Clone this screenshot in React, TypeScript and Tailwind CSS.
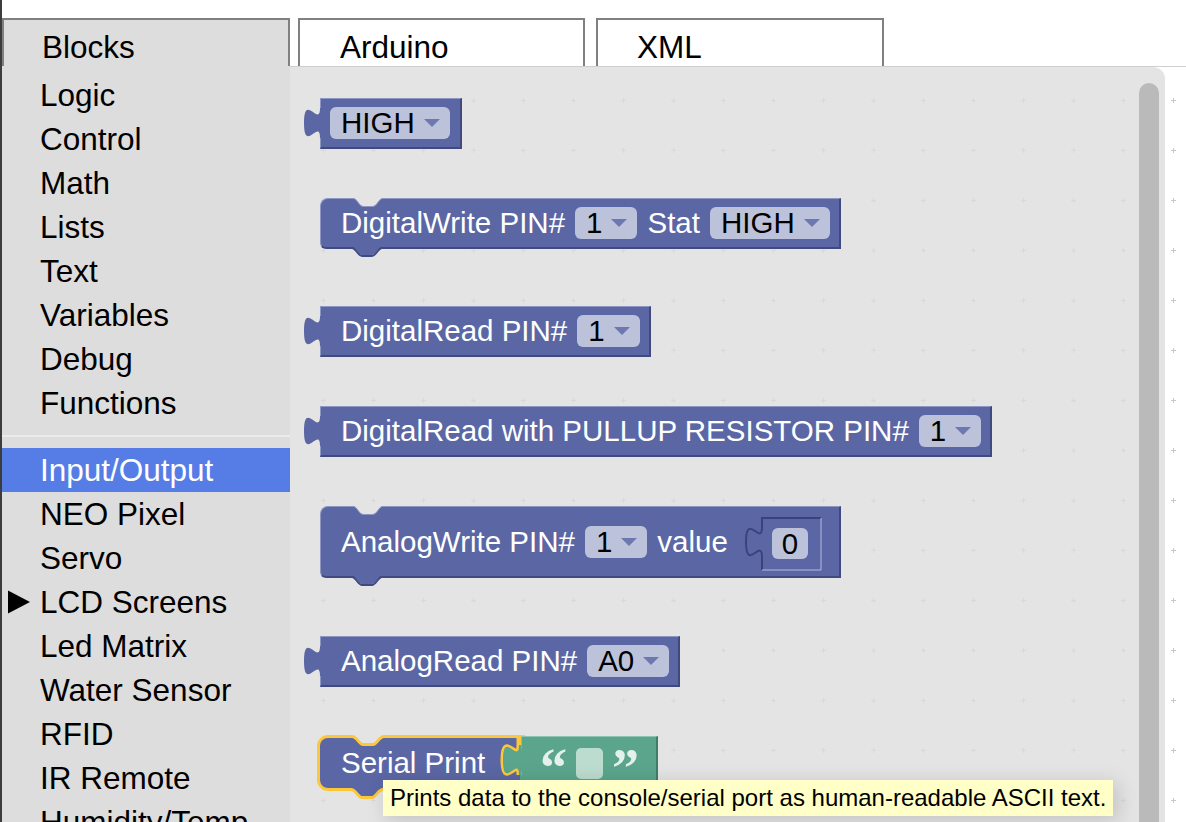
import React from "react";

const PURPLE = "#5b67a5";
const GREEN = "#5ba58c";
const FLY = "#e4e4e4";
const YELLOW = "#fcc83a";

function Arrow() {
  return (
    <svg width="16" height="8" viewBox="0 0 16 8" className="shrink-0">
      <path d="M0,0 H16 L8,8 Z" fill="#6d78b1" />
    </svg>
  );
}

function Dropdown({ label }: { label: string }) {
  return (
    <div className="flex h-[32px] shrink-0 items-center gap-[9px] rounded-[6px] bg-[#bdc2db] pl-[11px] pr-[10px] text-black">
      <span>{label}</span>
      <Arrow />
    </div>
  );
}

function OutputTab({ color = PURPLE }: { color?: string }) {
  return (
    <svg
      className="absolute left-[-17px] top-[9px] overflow-visible"
      width="18"
      height="32"
      viewBox="0 0 18 32"
    >
      <path d="M18,0 H16 C16,20 0,-16 0,15 C0,46 16,10 16,30 H18 Z" fill={color} />
    </svg>
  );
}

function Notch() {
  return (
    <svg className="absolute left-[32px] top-[-1px] overflow-visible" width="30" height="10" viewBox="0 0 30 10">
      <path d="M0,0 C4,0 6,8 10,8 H20 C24,8 26,0 30,0 Z" fill={FLY} />
      <path d="M0,0.5 C4,0.5 6,8.5 10,8.5 H20 C24,8.5 26,0.5 30,0.5" fill="none" stroke="#8e96c4" strokeWidth="1" />
    </svg>
  );
}

function Bump() {
  return (
    <svg className="absolute left-[31px] top-full overflow-visible" width="30" height="11" viewBox="0 0 30 11">
      <path d="M0,0 C4,0 6,8 10,8 H20 C24,8 26,0 30,0 Z" fill={PURPLE} />
      <path d="M0,1 C4,1 6,9 10,9 H20 C24,9 26,1 30,1" fill="none" stroke="#404a7e" strokeWidth="2" />
    </svg>
  );
}

function SelNotch() {
  return (
    <svg className="absolute left-[33px] top-[-3px] overflow-visible" width="30" height="12" viewBox="0 0 30 12">
      <path d="M-1,0 H31 V1.5 C26,1.5 24,9.5 20,9.5 H10 C6,9.5 4,1.5 -1,1.5 Z" fill={FLY} />
      <path d="M-1,1.5 C4,1.5 6,9.5 10,9.5 H20 C24,9.5 26,1.5 31,1.5" fill="none" stroke={YELLOW} strokeWidth="3" />
    </svg>
  );
}

function SelBump() {
  return (
    <svg className="absolute left-[32px] top-full overflow-visible" width="30" height="12" viewBox="0 0 30 12">
      <path d="M-1,0 H31 V1.5 C26,1.5 24,9.5 20,9.5 H10 C6,9.5 4,1.5 -1,1.5 Z" fill={PURPLE} />
      <path d="M-1,1.5 C4,1.5 6,9.5 10,9.5 H20 C24,9.5 26,1.5 31,1.5" fill="none" stroke={YELLOW} strokeWidth="3" />
    </svg>
  );
}

const blockBase =
  "relative flex shrink-0 items-center gap-[10px] bg-[#5b67a5] border-t border-l border-b-2 border-r-2 border-t-[#8e96c4] border-l-[#8e96c4] border-b-[#404a7e] border-r-[#404a7e] text-[29.5px] leading-none text-white";

function Grid() {
  return (
    <svg className="absolute inset-0 h-full w-full" width="100%" height="100%">
      <defs>
        <pattern id="bgrid" x="0" y="0" width="50" height="50" patternUnits="userSpaceOnUse">
          <rect x="31" y="33" width="5" height="1" fill="#c8c8c8" />
          <rect x="33" y="31" width="1" height="5" fill="#c8c8c8" />
        </pattern>
      </defs>
      <rect width="100%" height="100%" fill="url(#bgrid)" />
    </svg>
  );
}

function Toolbox() {
  const top = ["Logic", "Control", "Math", "Lists", "Text", "Variables", "Debug", "Functions"];
  const bottom = ["NEO Pixel", "Servo"];
  const bottom2 = ["Led Matrix", "Water Sensor", "RFID", "IR Remote", "Humidity/Temp"];
  return (
    <div className="w-[288px] shrink-0 overflow-hidden bg-[#dddddd] pt-[7px] text-[31.5px] leading-[44px] text-black">
      {top.map((t) => (
        <div key={t} className="h-[44px] whitespace-nowrap pl-[38px]">
          {t}
        </div>
      ))}
      <div className="h-[23px] pt-[10px]">
        <div className="h-[2px] w-full bg-[#ebebeb]" />
      </div>
      <div className="h-[44px] whitespace-nowrap bg-[#567de6] pl-[38px] text-white">Input/Output</div>
      {bottom.map((t) => (
        <div key={t} className="h-[44px] whitespace-nowrap pl-[38px]">
          {t}
        </div>
      ))}
      <div className="flex h-[44px] items-center whitespace-nowrap pl-[5px]">
        <svg width="24" height="24" viewBox="0 0 24 24" className="shrink-0">
          <path d="M1,0.5 L23,12 L1,23.5 Z" fill="#000" />
        </svg>
        <span className="ml-[9px]">LCD Screens</span>
      </div>
      {bottom2.map((t) => (
        <div key={t} className="h-[44px] whitespace-nowrap pl-[38px]">
          {t}
        </div>
      ))}
    </div>
  );
}

function Flyout() {
  return (
    <div className="relative flex h-full w-[875px] flex-col items-start rounded-tr-[12px] bg-[rgba(221,221,221,0.8)] pl-[30px]">
      {/* HIGH */}
      <div className={`${blockBase} mt-[31px] h-[51px] pl-[9px] pr-[10px]`}>
        <OutputTab />
        <Dropdown label="HIGH" />
      </div>

      {/* DigitalWrite */}
      <div className={`${blockBase} mt-[49px] h-[51px] rounded-tl-[8px] rounded-bl-[6px] pl-[20px] pr-[9px]`}>
        <Notch />
        <span className="whitespace-nowrap">DigitalWrite PIN#</span>
        <Dropdown label="1" />
        <span>Stat</span>
        <Dropdown label="HIGH" />
        <Bump />
      </div>

      {/* DigitalRead */}
      <div className={`${blockBase} mt-[57px] h-[51px] pl-[20px] pr-[9px]`}>
        <OutputTab />
        <span className="whitespace-nowrap">DigitalRead PIN#</span>
        <Dropdown label="1" />
      </div>

      {/* PULLUP */}
      <div className={`${blockBase} mt-[49px] h-[51px] pl-[20px] pr-[9px]`}>
        <OutputTab />
        <span className="whitespace-nowrap">DigitalRead with PULLUP RESISTOR PIN#</span>
        <Dropdown label="1" />
      </div>

      {/* AnalogWrite */}
      <div className={`${blockBase} mt-[49px] h-[72px] rounded-tl-[8px] rounded-bl-[6px] pl-[20px] pr-[16px]`}>
        <Notch />
        <span className="whitespace-nowrap">AnalogWrite PIN#</span>
        <Dropdown label="1" />
        <span>value</span>
        <div className="relative ml-[7px] mt-[4px] flex h-[54px] w-[78px] shrink-0 items-center pl-[27px]">
          <svg className="absolute inset-0 overflow-visible" width="78" height="54" viewBox="0 0 78 54">
            <path
              d="M76,1 H17 V10 C17,30 1,-6 1,25 C1,56 17,20 17,40 V53"
              fill="none"
              stroke="#39427a"
              strokeWidth="2"
            />
            <path d="M17,53 H76 V1" fill="none" stroke="#b4badd" strokeWidth="1" />
          </svg>
          <div className="relative flex h-[31px] w-[36px] items-center justify-center rounded-[6px] bg-[#bdc2db] text-black">
            0
          </div>
        </div>
        <Bump />
      </div>

      {/* AnalogRead */}
      <div className={`${blockBase} mt-[58px] h-[51px] pl-[20px] pr-[9px]`}>
        <OutputTab />
        <span className="whitespace-nowrap">AnalogRead PIN#</span>
        <Dropdown label="A0" />
      </div>

      {/* Serial Print */}
      <div className="relative mt-[51px] flex shrink-0 items-start text-[29.5px] leading-none text-white">
        <div className="relative flex h-[50px] w-[202px] items-center rounded-l-[8px] bg-[#5b67a5] pl-[21px] ring-[3px] ring-[#fcc83a]">
          <SelNotch />
          <span className="whitespace-nowrap">Serial Print</span>
          <SelBump />
        </div>
        <div className="relative z-10 ml-[-2px] mt-[-2px] flex h-[49px] w-[138px] items-start gap-[9px] border-t border-b-2 border-r-2 border-t-[#8dc4b1] border-b-[#3f7d67] border-r-[#3f7d67] bg-[#5ba58c] pl-[20px] pt-[11px]">
          <svg
            className="absolute left-[-17px] top-[8px] overflow-visible"
            width="18"
            height="32"
            viewBox="0 0 18 32"
          >
            <path d="M16,-9 V0 C16,20 0,-16 0,15 C0,46 16,10 16,30" fill="none" stroke={YELLOW} strokeWidth="5" />
            <path d="M18,0 H16 C16,20 0,-16 0,15 C0,46 16,10 16,30 H18 Z" fill={GREEN} />
          </svg>
          <span className="mt-[-2px] block h-[26px] w-[27px] overflow-visible text-center font-['Liberation_Serif',serif] text-[54px] font-bold leading-[44px] text-[#e3f0eb]">
            “
          </span>
          <div className="h-[31px] w-[27px] rounded-[5px] bg-[#bcdcd0]" />
          <span className="mt-[-2px] block h-[26px] w-[27px] overflow-visible text-center font-['Liberation_Serif',serif] text-[54px] font-bold leading-[44px] text-[#e3f0eb]">
            ”
          </span>
        </div>
      </div>

      <div className="absolute bottom-0 right-[6px] top-[16px] w-[20px] rounded-t-[10px] bg-[#bababa]" />
    </div>
  );
}

export default function App() {
  return (
    <div className="relative flex h-[822px] w-[1186px] overflow-hidden bg-white font-['Liberation_Sans',Arial,sans-serif]">
      <div className="w-[2px] shrink-0 bg-[#3c3c3c]" />
      <div className="flex min-w-0 flex-1 flex-col">
        <div className="flex h-[66px] shrink-0 items-end text-[31.5px] leading-[44px] text-black">
          <div className="h-[48px] w-[288px] border-2 border-b-0 border-[#808080] bg-[#dddddd] pl-[38px] pt-[5px]">
            Blocks
          </div>
          <div className="ml-[8px] h-[48px] w-[287px] border-2 border-b-0 border-[#808080] bg-white pl-[40px] pt-[5px]">
            Arduino
          </div>
          <div className="ml-[11px] h-[48px] w-[288px] border-2 border-b-0 border-[#808080] bg-white pl-[39px] pt-[5px]">
            XML
          </div>
        </div>
        <div className="flex min-h-0 flex-1">
          <Toolbox />
          <div className="relative flex-1 border-t border-[#cfcfcf]">
            <Grid />
            <Flyout />
          </div>
        </div>
      </div>
      <div className="absolute left-[383px] top-[780px] z-20 h-[36px] whitespace-nowrap bg-[#ffffc7] px-[7px] text-[24px] leading-[36px] text-black shadow-[4px_4px_20px_1px_rgba(0,0,0,0.15)]">
        Prints data to the console/serial port as human-readable ASCII text.
      </div>
    </div>
  );
}
